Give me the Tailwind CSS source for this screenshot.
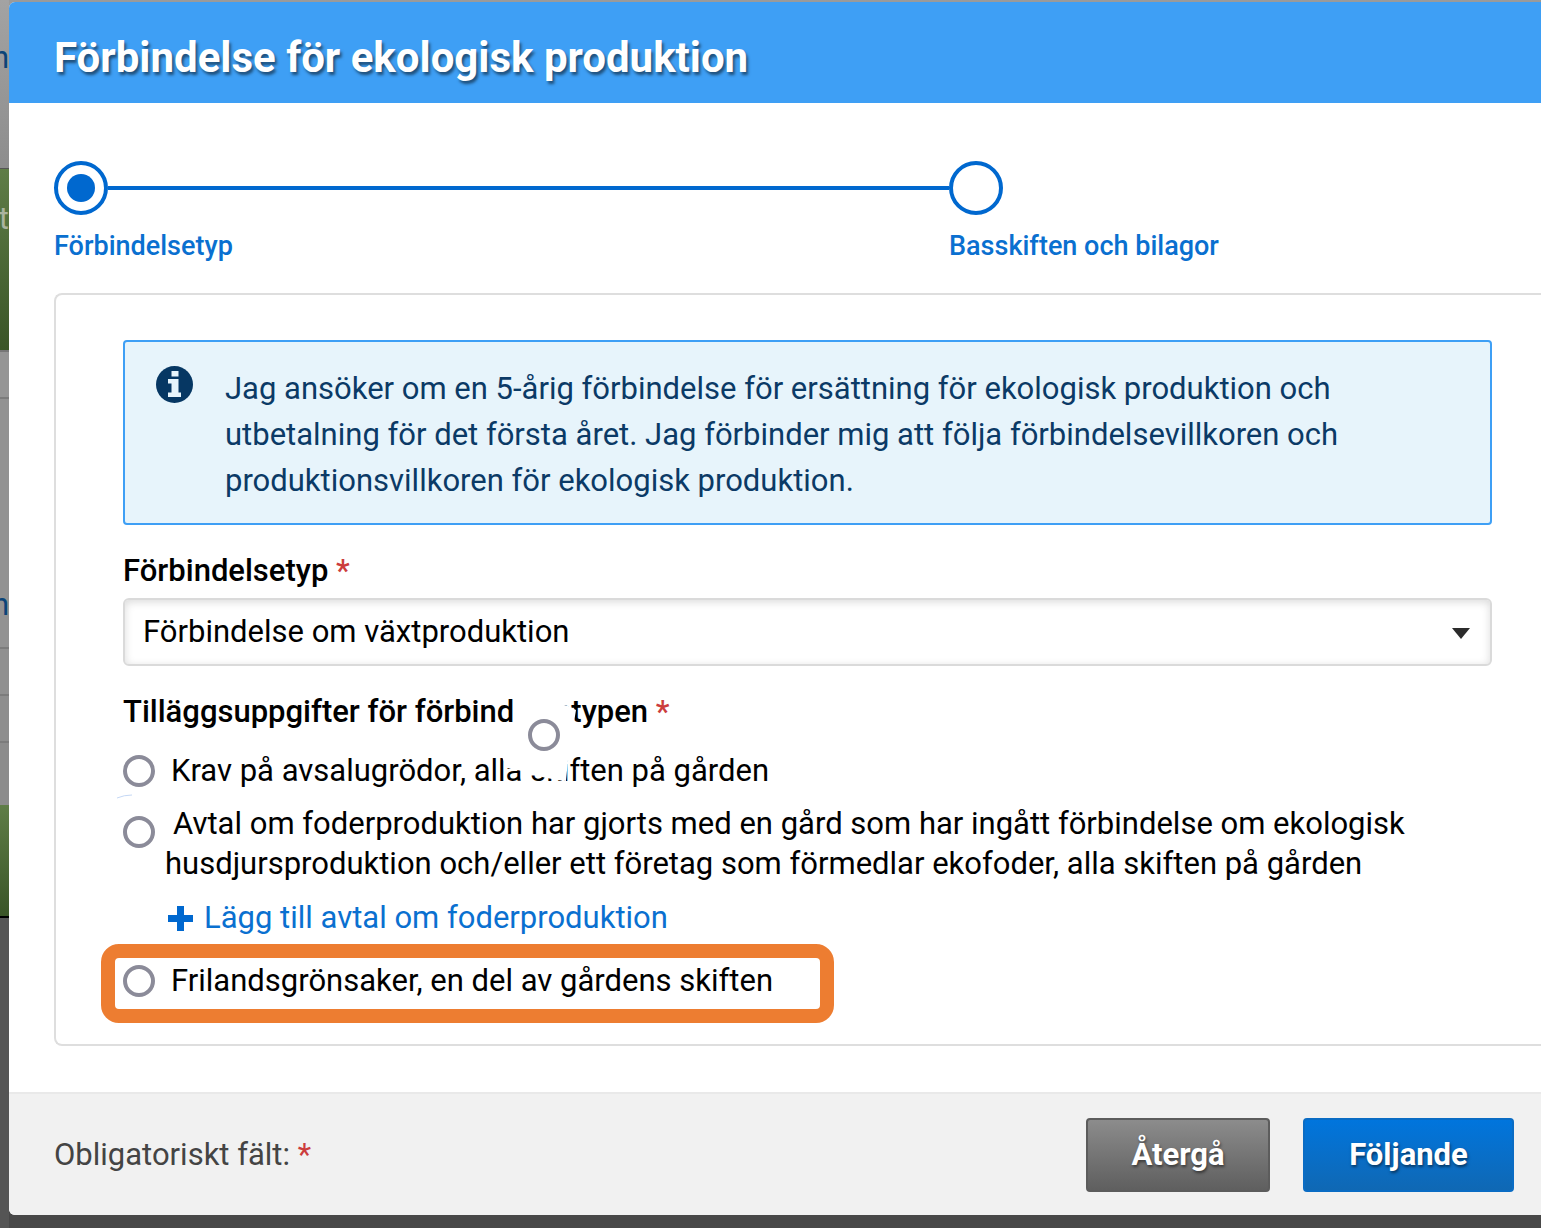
<!DOCTYPE html>
<html lang="sv">
<head>
  <meta charset="utf-8">
  <meta name="viewport" content="width=device-width, initial-scale=1">
  <title>Förbindelse för ekologisk produktion</title>
  <script src="https://cdn.jsdelivr.net/npm/@tailwindcss/browser@4"></script>
</head>
<body class="flex min-h-screen overflow-x-hidden bg-[#484848] font-[Roboto,sans-serif] text-black">
  <!-- Dimmed page behind the dialog -->
  <div class="flex w-[9px] shrink-0 flex-col overflow-hidden bg-[#555] text-[31px] leading-9" aria-hidden="true">
    <div class="flex h-[168px] justify-end bg-linear-to-b from-[#a3a3a3] to-[#8d8d8d] pt-10 text-[#0b4478]">n</div>
    <div class="flex h-[182px] justify-end border-t border-[#555] bg-linear-to-b from-[#5f7d47] to-[#3a5527] pt-8 text-[#a9b39f]">t</div>
    <div class="h-[47px] border-t-2 border-[#777] bg-[#959595]"></div>
    <div class="flex h-[250px] items-end justify-end border-t-2 border-[#7c7c7c] bg-[#929292] pb-6 text-[#0b4478]">n</div>
    <div class="h-[47px] border-t-2 border-[#7c7c7c] bg-[#909090]"></div>
    <div class="h-[47px] border-t-2 border-[#7c7c7c] bg-[#8e8e8e]"></div>
    <div class="h-[64px] border-t-2 border-[#7c7c7c] bg-[#8c8c8c]"></div>
    <div class="h-[113px] border-b-2 border-black bg-linear-to-b from-[#5f7d47] to-[#3a5527]"></div>
  </div>

  <div class="flex min-w-0 flex-1 flex-col bg-linear-to-b from-[#9a9a9a] from-50% to-[#484848] to-50% pt-[2px] pb-[13px]">
    <div class="flex flex-1 flex-col overflow-hidden rounded-l-md bg-white" role="dialog" aria-labelledby="dialog-title">
      <header class="flex h-[101px] items-center bg-[#3e9ff5] pt-[10px] pl-[45px]">
        <h1 id="dialog-title" class="text-[42px] leading-[50px] font-bold text-white text-shadow-[2px_3px_3px_rgb(0_0_0/0.5)]">Förbindelse för ekologisk produktion</h1>
      </header>

      <main class="flex-1 pl-[45px]">
        <ol class="grid grid-cols-[895fr_592fr] pt-[58px] text-[27px] leading-8 font-medium text-[#0a70d0]">
          <li>
            <div class="flex items-center">
              <span class="flex size-[54px] shrink-0 items-center justify-center rounded-full border-4 border-[#0068cf]">
                <span class="size-7 rounded-full bg-[#0068cf]"></span>
              </span>
              <span class="h-1 flex-1 bg-[#0068cf]"></span>
            </div>
            <p class="mt-[15px]">Förbindelsetyp</p>
          </li>
          <li>
            <span class="block size-[54px] rounded-full border-4 border-[#0068cf]"></span>
            <p class="mt-[15px]">Basskiften och bilagor</p>
          </li>
        </ol>

        <form class="mt-[31px] rounded-l-lg border-2 border-r-0 border-[#dedede] pt-[45px] pr-[49px] pb-[21px] pl-[67px] text-[31px] leading-10">
          <div class="flex rounded border-2 border-[#3e9ff5] bg-[#e7f4fb] pt-6 pr-8 pb-[19px] pl-[31px] leading-[46px] text-[#0b3a66]">
            <svg class="h-[37px] w-[37px] shrink-0" viewBox="0 0 37 37" aria-hidden="true">
              <circle cx="18.500" cy="18.500" r="18.500" fill="#063763" />
              <path d="M15.500 5h7v5.500h-7zM12 13h10.500v13.500h2.500v4.500H12v-4.500h3.500V17.500h-3.500z" fill="#e7f4fb" />
            </svg>
            <p class="ml-8">Jag ansöker om en 5-årig förbindelse för ersättning för ekologisk produktion och utbetalning för det första året. Jag förbinder mig att följa förbindelsevillkoren och produktionsvillkoren för ekologisk produktion.</p>
          </div>

          <label for="type" class="mt-[26px] block font-medium">Förbindelsetyp <span class="text-[#cc3d3d]">*</span></label>
          <div class="relative mt-[7px]">
            <select id="type" class="block h-[68px] w-full appearance-none rounded-md border-2 border-[#dadada] bg-white px-[18px] inset-shadow-[0_2px_8px_rgb(0_0_0/0.15)]">
              <option>Förbindelse om växtproduktion</option>
            </select>
            <svg class="pointer-events-none absolute top-[30px] right-[22px] h-[11px] w-[18px]" viewBox="0 0 18 11" aria-hidden="true">
              <path d="M0 0h18L9 11z" fill="#2b2b2b" />
            </svg>
          </div>

          <fieldset class="relative mt-[26px]">
            <legend class="font-medium">Tilläggsuppgifter för förbindelsetypen <span class="text-[#cc3d3d]">*</span></legend>
            <label class="mt-[19px] flex items-center gap-4">
              <input type="radio" name="extra" class="size-8 shrink-0 appearance-none rounded-full border-4 border-[#8b8b99] bg-white">
              <span>Krav på avsalugrödor, alla skiften på gården</span>
            </label>
            <label class="mt-[13px] flex gap-[10px]">
              <input type="radio" name="extra" class="mt-3 size-8 shrink-0 appearance-none rounded-full border-4 border-[#8b8b99] bg-white">
              <span class="indent-2">Avtal om foderproduktion har gjorts med en gård som har ingått förbindelse om ekologisk husdjursproduktion och/eller ett företag som förmedlar ekofoder, alla skiften på gården</span>
            </label>
            <a href="#" class="mt-[14px] ml-[45px] flex items-center gap-[11px] text-[#0a70d0]">
              <svg class="size-[25px]" viewBox="0 0 25 25" aria-hidden="true">
                <path d="M9 0h7v9h9v7h-9v9H9v-9H0V9h9z" fill="#0068cf" />
              </svg>
              Lägg till avtal om foderproduktion
            </a>
            <label class="mt-[6px] -ml-[22px] flex h-[79px] w-[733px] items-center gap-4 rounded-[18px] border-14 border-[#ed7d31] pb-[5px] pl-2">
              <input type="radio" name="extra" class="size-8 shrink-0 appearance-none rounded-full border-4 border-[#8b8b99] bg-white">
              <span>Frilandsgrönsaker, en del av gårdens skiften</span>
            </label>

            <!-- Loose radio on a white patch, lying over the first rows -->
            <svg class="pointer-events-none absolute -top-[40px] left-[377px] h-[96px] w-[90px]" viewBox="500 692 90 96" aria-hidden="true">
              <path d="M515 694L514 723L509 742L502 757L507 768L522 771L542 777L557 780L566 781L568 760L572 740L574 722L576 710L568 706L545 700L537 698L533 694z" fill="#fff" />
            </svg>
            <input type="radio" name="extra" aria-label="Förbindelsetyp" class="absolute -top-[13px] left-[405px] size-8 appearance-none rounded-full border-4 border-[#8b8b99] bg-white">
            <svg class="pointer-events-none absolute top-[62px] -left-[6px] h-[5px] w-4" viewBox="0 0 16 5" aria-hidden="true">
              <path d="M0 4Q7 1 15 1" fill="none" stroke="#c5d8f5" />
            </svg>
          </fieldset>
        </form>
      </main>

      <footer class="mt-[45px] flex items-center border-t-2 border-[#e9e9e9] bg-[#f1f1f1] pt-6 pr-[27px] pb-[23px] pl-[45px] text-[31px] leading-10">
        <p class="flex-1 text-[#444]">Obligatoriskt fält: <span class="text-[#cc3d3d]">*</span></p>
        <button type="button" class="h-[74px] w-[184px] rounded border-2 border-[#5c5c5c] bg-linear-to-b from-[#8c8c8c] to-[#5f5f5f] text-[31px] font-bold text-white text-shadow-[1px_2px_3px_rgb(0_0_0/0.5)]">Återgå</button>
        <button type="submit" class="ml-[33px] h-[74px] w-[211px] rounded border-2 border-[#0a6cc4] bg-linear-to-b from-[#0075dd] to-[#0f68b4] text-[31px] font-bold text-white text-shadow-[1px_2px_3px_rgb(0_0_0/0.5)]">Följande</button>
      </footer>
    </div>
  </div>
</body>
</html>
